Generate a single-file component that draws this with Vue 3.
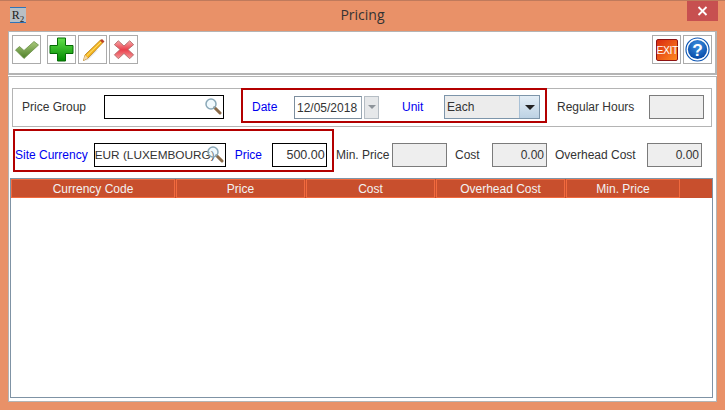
<script setup>
const columns = [
  {label: 'Currency Code', width: 164},
  {label: 'Price', width: 129},
  {label: 'Cost', width: 129},
  {label: 'Overhead Cost', width: 129},
  {label: 'Min. Price', width: 114}
];
</script>

<template>
  <div class="window">
    <div class="titlebar">
      <div class="app-icon"><span>R<sub>2</sub></span></div>
      <div class="title">Pricing</div>
      <div class="close">
        <svg width="11" height="10" viewBox="0 0 11 10"><path d="M1.5 1 L9.5 9 M9.5 1 L1.5 9" stroke="#fff" stroke-width="1.8" /></svg>
      </div>
    </div>

    <div class="content">
      <div class="toolbar">
        <button class="tool">
          <svg width="26" height="20" viewBox="0 0 26 20">
            <defs>
              <linearGradient id="chk" x1="0" y1="0" x2="0" y2="1"><stop offset="0" stop-color="#a9c97c" /><stop offset="1" stop-color="#4e7f28" /></linearGradient>
            </defs>
            <path d="M1.5 10 L5.5 6.5 L10 10.5 L20 1.5 L24.5 5 L10 18.5 Z" fill="url(#chk)" stroke="#6b8f48" stroke-width="0.8" stroke-linejoin="round" />
          </svg>
        </button>
        <button class="tool add">
          <svg width="25" height="25" viewBox="0 0 25 25">
            <defs>
              <linearGradient id="pls" x1="0" y1="0" x2="0" y2="1"><stop offset="0" stop-color="#63e04a" /><stop offset="1" stop-color="#008a00" /></linearGradient>
            </defs>
            <path d="M8.5 1 H16.5 V8.5 H24 V16.5 H16.5 V24 H8.5 V16.5 H1 V8.5 H8.5 Z" fill="url(#pls)" stroke="#046b04" stroke-width="1" stroke-linejoin="round" />
          </svg>
        </button>
        <button class="tool">
          <svg width="26" height="26" viewBox="0 0 26 26">
            <path d="M3 24 L7 15 L18 13 L8 23 Z" fill="#d8d8d8" opacity="0.7" />
            <path d="M5 18 L20.5 3 L23 5.5 L8 21 L3.5 23.5 Z" fill="#f6b820" stroke="#b87a10" stroke-width="0.8" stroke-linejoin="round" />
            <path d="M7 18.5 L21 5" stroke="#ffe27a" stroke-width="1" />
            <path d="M5 18 L8 21 L3.5 23.5 Z" fill="#f2d6a8" />
            <path d="M20 3.5 L22 2 L24.5 4.5 L22.5 6 Z" fill="#b8402c" />
          </svg>
        </button>
        <button class="tool">
          <svg width="22" height="21" viewBox="0 0 24 24">
            <defs>
              <linearGradient id="del" x1="0" y1="0" x2="0" y2="1"><stop offset="0" stop-color="#f7a8a8" /><stop offset="0.5" stop-color="#ea3f4c" /><stop offset="1" stop-color="#f49a9a" /></linearGradient>
            </defs>
            <path d="M5.5 2 L12 8 L18.5 2 L23 6.5 L16.5 12 L23 18 L18.5 22.5 L12 16.5 L5.5 22.5 L1 18 L7.5 12 L1 6.5 Z" fill="url(#del)" stroke="#b06a6a" stroke-width="1" stroke-linejoin="round" />
          </svg>
        </button>
        <div class="spacer"></div>
        <button class="tool"><span class="exit">EXIT</span></button>
        <button class="tool">
          <svg width="25" height="25" viewBox="0 0 26 26">
            <defs>
              <radialGradient id="hlp" cx="0.5" cy="0.3" r="0.8"><stop offset="0" stop-color="#3b8fe0" /><stop offset="1" stop-color="#003f9e" /></radialGradient>
            </defs>
            <circle cx="13" cy="13" r="12" fill="#fff" stroke="#0d56b4" stroke-width="1.2" />
            <circle cx="13" cy="13" r="10" fill="url(#hlp)" />
            <text x="13" y="19.5" text-anchor="middle" class="help-mark">?</text>
          </svg>
        </button>
      </div>

      <div class="form">
        <div class="panel">
          <label class="lbl price-group">Price Group</label>
          <div class="input search group-input">
            <svg class="glass" width="18" height="18" viewBox="0 0 18 18">
              <path d="M10.5 10.5 L16 16" stroke="#8a6a48" stroke-width="3" stroke-linecap="round" />
              <circle cx="7" cy="7" r="5" fill="#dcf3fc" fill-opacity="0.4" stroke="#8aa8b8" stroke-width="1.5" />
            </svg>
          </div>
          <div class="red-box date-box">
            <label class="lbl blue date-label">Date</label>
            <div class="date-input">12/05/2018</div>
            <div class="spin"><i></i></div>
            <label class="lbl blue unit-label">Unit</label>
            <div class="combo">
              <span class="combo-text">Each</span>
              <span class="combo-arrow"><i></i></span>
            </div>
          </div>
          <label class="lbl regular">Regular Hours</label>
          <div class="readonly regular-box"></div>
        </div>

        <div class="row2">
          <div class="red-box site-box">
            <label class="lbl blue">Site Currency</label>
            <div class="input search currency-input">
              <span>EUR (LUXEMBOURG)</span>
              <svg class="glass" width="18" height="18" viewBox="0 0 18 18">
                <path d="M10.5 10.5 L16 16" stroke="#8a6a48" stroke-width="3" stroke-linecap="round" />
                <circle cx="7" cy="7" r="5" fill="#dcf3fc" fill-opacity="0.4" stroke="#8aa8b8" stroke-width="1.5" />
              </svg>
            </div>
            <label class="lbl blue price-label">Price</label>
            <div class="input price-input">500.00</div>
          </div>
          <label class="lbl min-label">Min. Price</label>
          <div class="readonly min-box"></div>
          <label class="lbl cost-label">Cost</label>
          <div class="readonly cost-box">0.00</div>
          <label class="lbl overhead-label">Overhead Cost</label>
          <div class="readonly overhead-box">0.00</div>
        </div>

        <div class="grid">
          <div class="grid-head">
            <div v-for="col in columns" :key="col.label" class="head-cell" :style="{width: col.width + 'px'}">{{ col.label }}</div>
          </div>
        </div>
      </div>
    </div>
  </div>
</template>

<style scoped>
.window {
  width: 725px;
  height: 410px;
  box-sizing: border-box;
  display: flex;
  flex-direction: column;
  background: #e99168;
  border-top: 1px solid #bf7a5c;
  font-family: "Liberation Sans", Arial, sans-serif;
  font-size: 12px;
  color: #333;
  overflow: hidden;
}

.titlebar {
  height: 30px;
  display: flex;
  align-items: flex-start;
  position: relative;
  flex: none;
}

.app-icon {
  width: 16px;
  height: 16px;
  margin: 6px 0 0 10px;
  background: #b9bfc4;
  border-top: 1px solid #2f74b8;
  border-bottom: 1px solid #2f74b8;
  box-sizing: border-box;
  font-family: "Liberation Serif", serif;
  font-size: 12px;
  line-height: 14px;
  color: #222;
  text-align: center;
  overflow: hidden;
  flex: none;
}

.app-icon sub {
  font-size: 9px;
  line-height: 0;
}

.title {
  flex: 1;
  margin-left: -26px;
  padding-top: 5px;
  text-align: center;
  font-family: "Open Sans", sans-serif;
  font-size: 14px;
  line-height: 18px;
  color: #333;
}

.close {
  position: absolute;
  top: 0;
  right: 7px;
  width: 31px;
  height: 20px;
  background: #c75050;
  display: flex;
  align-items: center;
  justify-content: center;
}

.content {
  margin: 0 8px 0 8px;
  width: 709px;
  display: flex;
  flex-direction: column;
  background: #fff;
  flex: none;
  height: 371px;
}

.toolbar {
  height: 44px;
  box-sizing: border-box;
  display: flex;
  gap: 2px;
  padding: 3px 3px 0 3px;
  background: #fff;
  border: 1px solid #b4b4b4;
  border-bottom-width: 2px;
  border-right-width: 2px;
  flex: none;
}

.tool {
  width: 29px;
  height: 29px;
  box-sizing: border-box;
  padding: 0;
  border: 1px solid #ababab;
  background: #fff;
  display: flex;
  align-items: center;
  justify-content: center;
}

.tool.add {
  margin-left: 4px;
}

.spacer {
  flex: 1;
}

.exit {
  width: 22px;
  height: 22px;
  box-sizing: border-box;
  border: 1px solid #8e1313;
  border-radius: 2px;
  background: linear-gradient(135deg, #d92a10, #ff8a20);
  color: #fff;
  font-size: 10.5px;
  line-height: 20px;
  text-align: center;
  letter-spacing: -0.5px;
  white-space: nowrap;
}

.help-mark {
  font-family: "Liberation Sans", sans-serif;
  font-size: 18px;
  font-weight: 700;
  fill: #fff;
}

.form {
  flex: 1;
  border: 1px solid #b4b4b4;
  padding: 11px 4px 3px 3px;
  display: flex;
  flex-direction: column;
  margin-top: 1px;
}

.panel {
  width: 700px;
  height: 39px;
  box-sizing: border-box;
  border: 1px solid #b4b4b4;
  display: flex;
  align-items: flex-start;
  flex: none;
}

.lbl {
  line-height: 24px;
  white-space: nowrap;
  flex: none;
}

.blue {
  color: #0000f0;
}

.price-group {
  margin: 6px 0 0 9px;
  width: 82px;
}

.input {
  height: 24px;
  box-sizing: border-box;
  border: 1px solid #000;
  background: #fff;
  line-height: 22px;
  flex: none;
  position: relative;
  overflow: hidden;
  white-space: nowrap;
}

.group-input {
  width: 120px;
  margin-top: 6px;
}

.glass {
  position: absolute;
  top: 1px;
  right: 1px;
}

.red-box {
  box-sizing: border-box;
  border: 2px solid #b30000;
  display: flex;
  align-items: center;
  flex: none;
}

.date-box {
  width: 306px;
  height: 35px;
  margin: -1px 0 0 17px;
  padding: 3px 0 0 9px;
}

.date-label {
  width: 42px;
}

.date-input {
  width: 68px;
  height: 23px;
  box-sizing: border-box;
  border: 1px solid #7d8e9e;
  border-right-color: #9aa8b4;
  line-height: 22px;
  padding-left: 2px;
  overflow: hidden;
}

.spin {
  width: 15px;
  height: 23px;
  margin-left: 2px;
  box-sizing: border-box;
  border: 1px solid #b5bdc4;
  background: #e6e8ea;
  display: flex;
  align-items: center;
  justify-content: center;
}

.spin i {
  border-left: 4px solid transparent;
  border-right: 4px solid transparent;
  border-top: 4px solid #8d949a;
}

.unit-label {
  margin-left: 23px;
  width: 42px;
}

.combo {
  width: 96px;
  height: 24px;
  box-sizing: border-box;
  border: 1px solid #7d95aa;
  display: flex;
  background: #ececec;
}

.combo-text {
  flex: 1;
  line-height: 22px;
  padding-left: 2px;
  border-right: 1px solid #a9c1d6;
}

.combo-arrow {
  width: 19px;
  background: linear-gradient(#e4eef6, #bdd2e4);
  display: flex;
  align-items: center;
  justify-content: center;
}

.combo-arrow i {
  border-left: 5px solid transparent;
  border-right: 5px solid transparent;
  border-top: 5px solid #222;
}

.readonly {
  width: 55px;
  height: 24px;
  box-sizing: border-box;
  border: 1px solid #7b7b7b;
  background: #eeeeee;
  line-height: 22px;
  text-align: right;
  padding-right: 2px;
  flex: none;
}

.regular {
  margin: 6px 0 0 10px;
  width: 92px;
}

.regular-box {
  margin-top: 6px;
}

.row2 {
  display: flex;
  align-items: flex-start;
  margin: 2px 0 0 1px;
  height: 43px;
  flex: none;
}

.row2 > .lbl,
.row2 > .readonly {
  margin-top: 14px;
}

.site-box {
  width: 321px;
  height: 43px;
  padding-top: 9px;
}

.currency-input {
  width: 132px;
  margin-left: 6px;
  font-size: 11.8px;
}

.price-label {
  margin-left: 9px;
  width: 37px;
}

.price-input {
  width: 55px;
  text-align: right;
  padding-right: 1px;
  font-size: 12.5px;
}

.min-label {
  margin-left: 2px;
  width: 56px;
}

.cost-label {
  margin-left: 8px;
  width: 37px;
}

.overhead-label {
  margin-left: 8px;
  width: 92px;
}

.grid {
  flex: 1;
  margin-top: 6px;
  margin-left: -2px;
  width: 703px;
  border: 1px solid #7f93a5;
  box-sizing: border-box;
}

.grid-head {
  height: 19px;
  display: flex;
  gap: 1px;
  background: #c84f2d;
}

.head-cell {
  box-sizing: border-box;
  border: 1px solid #f26a3e;
  color: #f2f2f2;
  text-align: center;
  line-height: 19px;
  flex: none;
}
</style>
